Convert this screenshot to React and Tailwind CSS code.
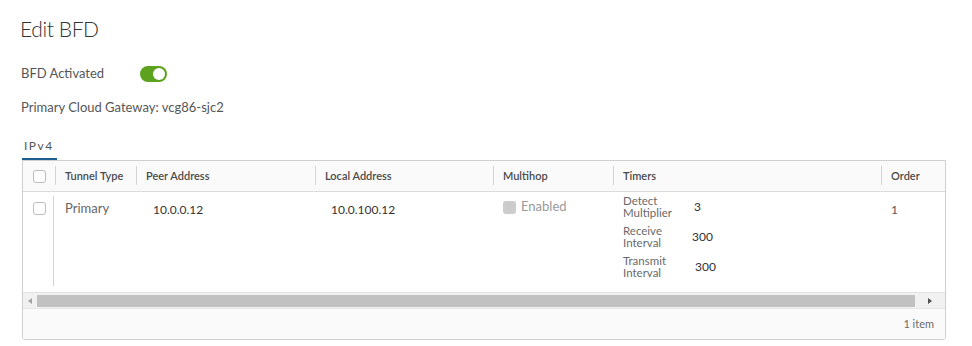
import React from "react";

function Check({ disabled }) {
  return disabled ? (
    <span className="inline-block w-[13px] h-[13px] rounded-[3px] bg-[#cccccc]" />
  ) : (
    <span className="inline-block w-[13px] h-[13px] rounded-[3px] border border-[#bdbdbd] bg-white" />
  );
}

function HeadCell({ w, children, sep = true }) {
  return (
    <div className={`relative flex items-center h-full shrink-0 ${w}`}>
      {sep && <span className="absolute left-0 top-[5px] bottom-[6px] w-px bg-[#d4d4d4]" />}
      <span className="pl-[10px]">{children}</span>
    </div>
  );
}

function Timer({ label1, label2, value, vx }) {
  return (
    <div className="flex items-center h-[24px]">
      <div className="w-[70px] text-[11.5px] leading-[12px] text-[#6a6a6a]">
        <div>{label1}</div>
        <div>{label2}</div>
      </div>
      <div className={`text-[12px] text-[#333] ${vx}`}>{value}</div>
    </div>
  );
}

export default function App() {
  return (
    <div className="w-[972px] h-[346px] bg-white overflow-hidden font-['Lato',sans-serif] text-[#565656]">
      <div className="pl-[20px] pt-[15px]">
        <h1 className="text-[21px] leading-[28px] font-light text-[#333] tracking-[-0.4px]">Edit BFD</h1>
        <div className="mt-[23px] flex items-center h-[16px]">
          <span className="w-[120px] pl-px text-[13px]">BFD Activated</span>
          <span className="relative w-[27px] h-[16px] rounded-full bg-[#5ca21f]">
            <span className="absolute right-[2px] top-[2px] w-[12px] h-[12px] rounded-full bg-white" />
          </span>
        </div>
        <p className="mt-[17px] pl-px text-[13px] leading-[16px]">Primary Cloud Gateway: vcg86-sjc2</p>
        <div className="mt-[24px] ml-[2px] w-[35px] h-[21px] border-b-2 border-[#1c5e8e] flex items-start pl-[2px] text-[12px] leading-[14px] tracking-[1.5px]">
          IPv4
        </div>
        <div className="ml-[2px] w-[924px] h-[180px] border border-[#cfcfcf] rounded-b-[3px] flex flex-col overflow-hidden">
          <div className="flex-1 overflow-hidden">
            <div className="w-[1000px]">
              <div className="h-[31px] flex bg-[#fafafa] border-b border-[#dcdcdc] text-[11px] font-semibold text-[#4a4a4a]">
                <div className="w-[32px] shrink-0 flex items-center pl-[10px]">
                  <Check />
                </div>
                <HeadCell w="w-[81px]">Tunnel Type</HeadCell>
                <HeadCell w="w-[179px]">Peer Address</HeadCell>
                <HeadCell w="w-[178px]">Local Address</HeadCell>
                <HeadCell w="w-[120px]">Multihop</HeadCell>
                <HeadCell w="w-[268px]">Timers</HeadCell>
                <HeadCell w="w-[100px]">Order</HeadCell>
              </div>
              <div className="h-[99px] flex text-[13px]">
                <div className="relative w-[32px] shrink-0 pl-[10px] pt-[9px]">
                  <Check />
                  <span className="absolute right-px top-[4px] bottom-[5px] w-px bg-[#d4d4d4]" />
                </div>
                <div className="w-[81px] shrink-0 pl-[10px] pt-[7px] text-[#666]">Primary</div>
                <div className="w-[179px] shrink-0 pl-[17px] pt-[9px] text-[12px] text-[#333]">10.0.0.12</div>
                <div className="w-[178px] shrink-0 pl-[16px] pt-[9px] text-[12px] text-[#333]">10.0.100.12</div>
                <div className="w-[120px] shrink-0 pl-[10px] pt-[7px] flex items-start gap-[5px]">
                  <span className="mt-[1px]"><Check disabled /></span>
                  <span className="text-[#9a9a9a] leading-[15px]">Enabled</span>
                </div>
                <div className="w-[268px] shrink-0 pl-[10px] pt-[3px] flex flex-col gap-[6px]">
                  <Timer label1="Detect" label2="Multiplier" value="3" vx="pl-px" />
                  <Timer label1="Receive" label2="Interval" value="300" vx="-ml-px" />
                  <Timer label1="Transmit" label2="Interval" value="300" vx="ml-[2px]" />
                </div>
                <div className="w-[100px] shrink-0 pl-[10px] pt-[9px] text-[12px] text-[#555]">1</div>
              </div>
            </div>
          </div>
          <div className="h-[16px] flex items-center bg-[#f1f1f1] border-t border-[#e2e2e2]">
            <div className="w-[14px] h-full flex items-center justify-center">
              <span className="w-0 h-0 border-y-[3px] border-y-transparent border-r-[4px] border-r-[#a3a3a3]" />
            </div>
            <div className="w-[878px] h-[12px] bg-[#c1c1c1]" />
            <div className="flex-1 h-full flex items-center justify-center">
              <span className="w-0 h-0 border-y-[3px] border-y-transparent border-l-[4px] border-l-[#505050]" />
            </div>
          </div>
          <div className="h-[31px] bg-[#fafafa] border-t border-[#e6e6e6] flex items-center justify-end pr-[11px] text-[11px] text-[#6a6a6a]">
            1 item
          </div>
        </div>
      </div>
    </div>
  );
}
